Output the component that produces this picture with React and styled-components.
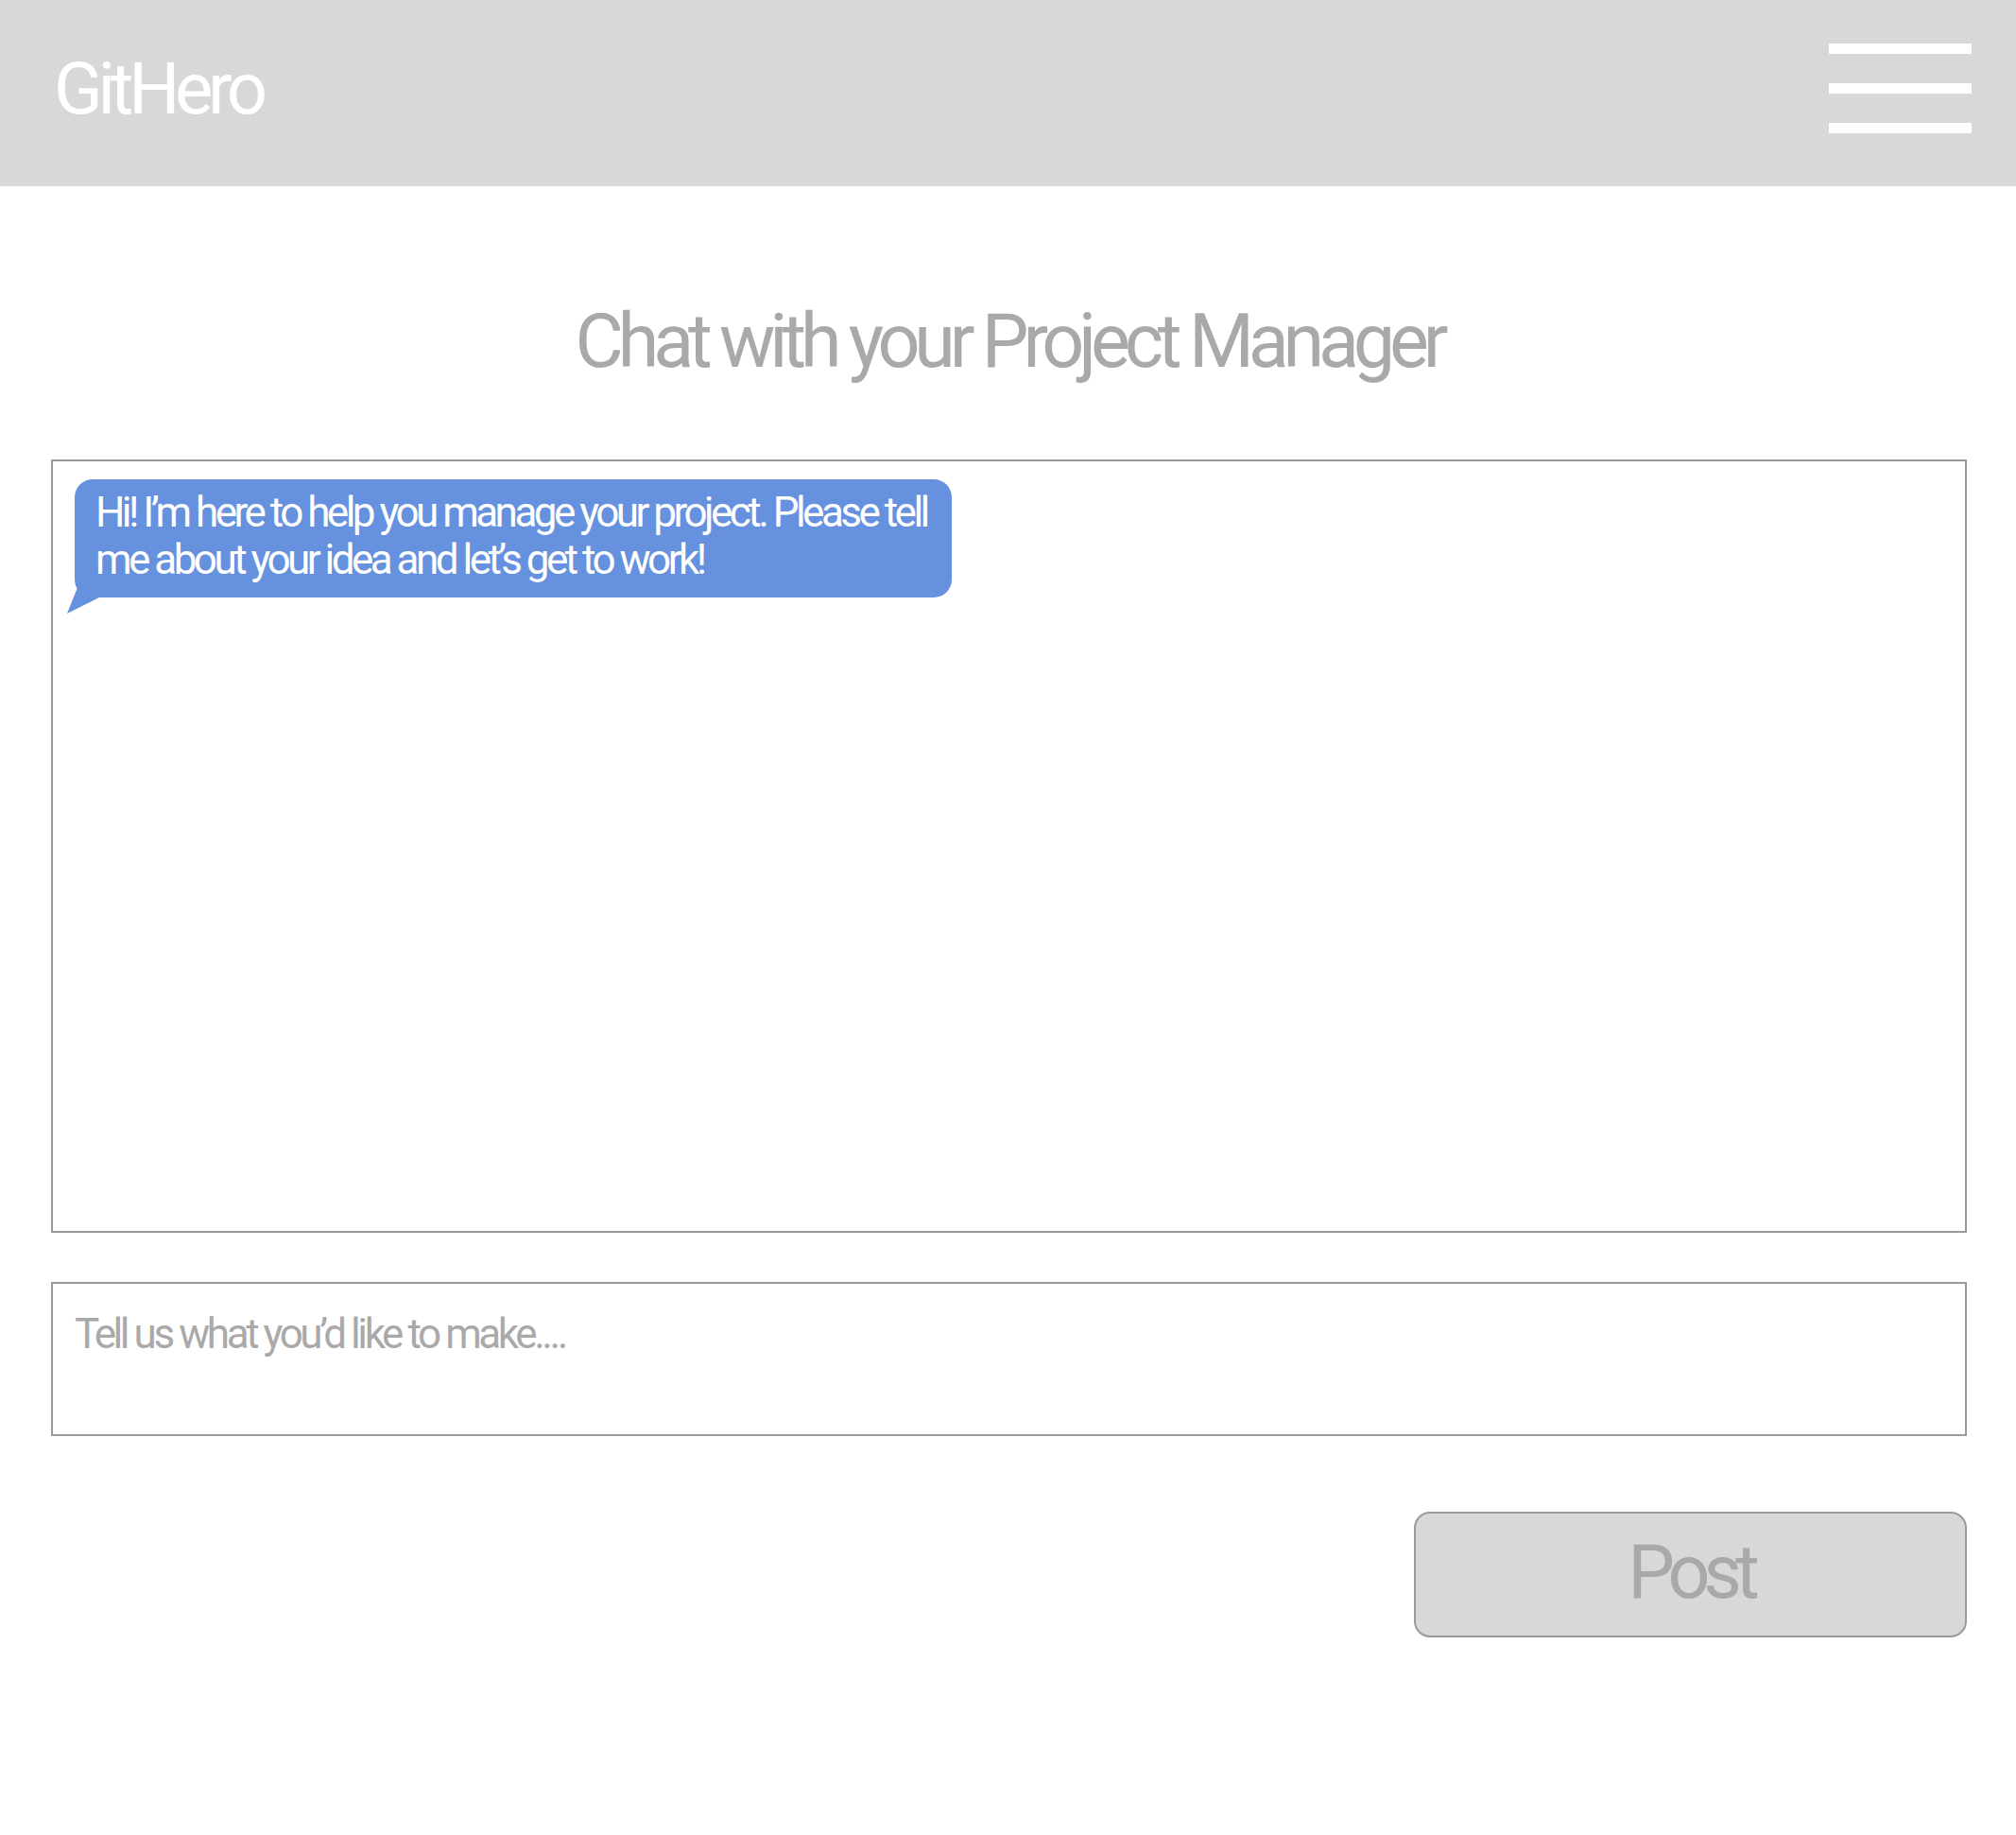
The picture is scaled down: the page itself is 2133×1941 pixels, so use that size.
import React from "react";
import styled, { createGlobalStyle } from "styled-components";

const GlobalStyle = createGlobalStyle`
  * {
    box-sizing: border-box;
  }
  body {
    margin: 0;
    background: #ffffff;
    font-family: Roboto, "Noto Sans", "Liberation Sans", sans-serif;
  }
`;

const Header = styled.header`
  height: 197px;
  background: #d8d8d8;
  display: flex;
  align-items: center;
  justify-content: space-between;
  padding: 0 47px 0 57px;
`;

const Logo = styled.div`
  font-size: 76px;
  line-height: 1;
  color: #ffffff;
  letter-spacing: -0.07em;
  margin-top: -10px;
`;

const Burger = styled.button`
  width: 151px;
  display: flex;
  flex-direction: column;
  gap: 31px;
  padding: 0;
  border: none;
  background: none;
  margin-top: -10px;
`;

const BurgerBar = styled.span`
  display: block;
  height: 11px;
  background: #ffffff;
`;

const Main = styled.main`
  padding: 125px 52px 0 54px;
  display: flex;
  flex-direction: column;
`;

const Title = styled.h1`
  margin: 0;
  font-size: 79px;
  font-weight: 400;
  line-height: 1;
  color: #a9a9a9;
  text-align: center;
  letter-spacing: -0.078em;
`;

const ChatBox = styled.section`
  margin-top: 85px;
  height: 818px;
  border: 2px solid #9a9a9a;
  padding: 19px 23px;
  display: flex;
  flex-direction: column;
  align-items: flex-start;
`;

const Bubble = styled.div`
  position: relative;
  width: 928px;
  background: #6691de;
  border-radius: 19px;
  padding: 10px 0 15px 22px;
  color: #ffffff;
  font-size: 44px;
  line-height: 50px;
  letter-spacing: -0.08em;
  white-space: nowrap;

  &::before {
    content: "";
    position: absolute;
    left: -8px;
    bottom: -17px;
    width: 34px;
    height: 30px;
    background: #6691de;
    clip-path: polygon(12px 0, 34px 13px, 0 30px);
  }
`;

const Composer = styled.textarea`
  margin-top: 52px;
  height: 163px;
  border: 2px solid #9a9a9a;
  border-radius: 0;
  padding: 28px 23px;
  font-family: inherit;
  font-size: 44px;
  line-height: 50px;
  letter-spacing: -0.078em;
  color: #555555;
  resize: none;
  outline: none;

  &::placeholder {
    color: #a9a9a9;
  }
`;

const Actions = styled.div`
  margin-top: 80px;
  display: flex;
  justify-content: flex-end;
`;

const PostButton = styled.button`
  width: 585px;
  height: 133px;
  background: #d8d8d8;
  border: 2px solid #9a9a9a;
  border-radius: 17px;
  font-family: inherit;
  font-size: 79px;
  line-height: 1;
  color: #a9a9a9;
  letter-spacing: -0.09em;
  padding: 0 0 4px;
`;

export default function App() {
  return (
    <>
      <GlobalStyle />
      <Header>
        <Logo>GitHero</Logo>
        <Burger aria-label="Menu">
          <BurgerBar />
          <BurgerBar />
          <BurgerBar />
        </Burger>
      </Header>
      <Main>
        <Title>Chat with your Project Manager</Title>
        <ChatBox>
          <Bubble>
            Hi! I’m here to help you manage your project. Please tell
            <br />
            me about your idea and let’s get to work!
          </Bubble>
        </ChatBox>
        <Composer placeholder="Tell us what you’d like to make...." />
        <Actions>
          <PostButton>Post</PostButton>
        </Actions>
      </Main>
    </>
  );
}
